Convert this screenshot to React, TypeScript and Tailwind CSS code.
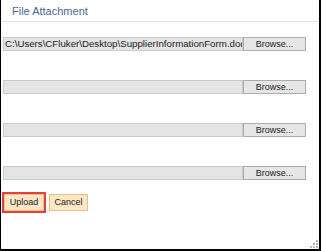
const rows = [
  'C:\\Users\\CFluker\\Desktop\\SupplierInformationForm.doc',
  '',
  '',
  '',
];

export default function App() {
  return (
    <div className="relative w-[321px] h-[251px] bg-white border-l border-r-2 border-b-2 border-black font-['Liberation_Sans',Arial,sans-serif]">
      <div className="h-[22px] border-b border-[#e3e3e3] pl-[11px] pt-[4px]">
        <span className="block text-[11px] leading-[14px] text-[#4a6896]">File Attachment</span>
      </div>

      <div className="flex flex-col gap-[29px] pl-[2px] mt-[15px]">
        {rows.map((value, i) => (
          <div key={i} className="flex h-[14px]">
            <div className="w-[240px] h-[14px] bg-[#e4e4e4] border border-[#c9c9c9] overflow-hidden whitespace-nowrap text-[9.7px] leading-[12px] text-[#1a1a1a] pl-[1px]">
              {value}
            </div>
            <button className="w-[63px] h-[14px] bg-[#e6e6e6] border border-[#acacac] text-[9px] leading-[12px] text-[#1a1a1a]">
              Browse...
            </button>
          </div>
        ))}
      </div>

      <div className="flex gap-[5px] pl-[3px] mt-[14px]">
        <button className="w-[40px] h-[17px] bg-[#fde6c6] border border-[#e6c190] outline-2 outline-[#e5403c] text-[9px] leading-[15px] text-[#1a1a1a]">
          Upload
        </button>
        <button className="w-[39px] h-[17px] bg-[#fde6c6] border border-[#e6c190] text-[9px] leading-[15px] text-[#1a1a1a]">
          Cancel
        </button>
      </div>

      <svg className="absolute right-[1px] bottom-[1px]" width="8" height="8" viewBox="0 0 8 8">
        <rect x="6" y="0" width="2" height="2" fill="#b5b5b5" />
        <rect x="3" y="3" width="2" height="2" fill="#b5b5b5" />
        <rect x="6" y="3" width="2" height="2" fill="#b5b5b5" />
        <rect x="0" y="6" width="2" height="2" fill="#b5b5b5" />
        <rect x="3" y="6" width="2" height="2" fill="#b5b5b5" />
        <rect x="6" y="6" width="2" height="2" fill="#b5b5b5" />
      </svg>
    </div>
  );
}
